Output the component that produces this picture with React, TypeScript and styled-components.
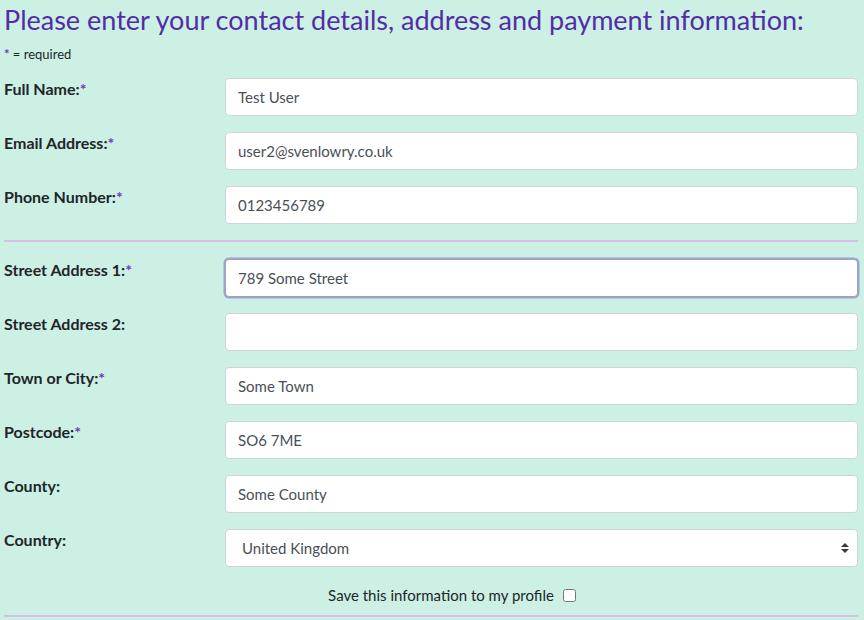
import React, { useState } from "react";
import styled, { createGlobalStyle } from "styled-components";

const GlobalStyle = createGlobalStyle`
  html, body {
    margin: 0;
    padding: 0;
    background: #cdf0e4;
  }
  body {
    font-family: "Lato", "Open Sans", sans-serif;
    color: #212529;
  }
  * {
    box-sizing: border-box;
  }
`;

const Page = styled.div`
  padding: 2px 6px 0 4px;
  height: 620px;
  overflow: hidden;
`;

const Title = styled.h1`
  margin: 0;
  font-size: 27px;
  font-weight: 400;
  line-height: 36px;
  color: #512da8;
`;

const Note = styled.p`
  margin: 8px 0 16px;
  font-size: 13px;
  line-height: 16px;
`;

const Star = styled.span`
  color: #6a3cb8;
  font-weight: 700;
`;

const Row = styled.div`
  display: grid;
  grid-template-columns: 221px 1fr;
  align-items: start;
  margin-bottom: 16px;
`;

const Label = styled.label`
  font-size: 16px;
  font-weight: 700;
  line-height: 22px;
`;

const Input = styled.input<{ $focused?: boolean }>`
  width: 100%;
  height: 38px;
  padding: 0 12px;
  font-family: inherit;
  font-size: 15px;
  color: #495057;
  background: #fff;
  border: 1px solid ${(p) => (p.$focused ? "#9ea2c8" : "#ced4da")};
  border-radius: 4px;
  box-shadow: ${(p) => (p.$focused ? "0 0 0 1.5px #9ea2c8" : "none")};
  outline: none;
`;

const SelectWrap = styled.div`
  position: relative;
`;

const Select = styled.select`
  width: 100%;
  height: 38px;
  padding: 0 16px;
  font-family: inherit;
  font-size: 15px;
  color: #495057;
  background: #fff;
  border: 1px solid #ced4da;
  border-radius: 4px;
  appearance: none;
  outline: none;
`;

const Caret = styled.svg`
  position: absolute;
  right: 8px;
  top: 13px;
  pointer-events: none;
`;

const Divider = styled.hr`
  margin: 0 0 17px;
  border: none;
  height: 2px;
  background: #d9bde4;
`;

const SaveLine = styled.label`
  display: flex;
  align-items: center;
  justify-content: center;
  gap: 9px;
  height: 24px;
  margin-bottom: 8px;
  padding-left: 42px;
  font-size: 15px;
`;

const Check = styled.input`
  width: 13px;
  height: 13px;
  margin: 0;
`;

type Field = { label: string; value: string; required?: boolean; focused?: boolean };

const contact: Field[] = [
  { label: "Full Name:", value: "Test User", required: true },
  { label: "Email Address:", value: "user2@svenlowry.co.uk", required: true },
  { label: "Phone Number:", value: "0123456789", required: true },
];

const address: Field[] = [
  { label: "Street Address 1:", value: "789 Some Street", required: true, focused: true },
  { label: "Street Address 2:", value: "" },
  { label: "Town or City:", value: "Some Town", required: true },
  { label: "Postcode:", value: "SO6 7ME", required: true },
  { label: "County:", value: "Some County" },
];

const FieldRow = ({ field }: { field: Field }) => {
  const [value, setValue] = useState(field.value);
  return (
    <Row>
      <Label>
        {field.label}
        {field.required && <Star>*</Star>}
      </Label>
      <Input
        $focused={field.focused}
        value={value}
        onChange={(e) => setValue(e.target.value)}
      />
    </Row>
  );
};

export default function App() {
  return (
    <>
      <GlobalStyle />
      <Page>
        <Title>Please enter your contact details, address and payment information:</Title>
        <Note>
          <Star>*</Star> = required
        </Note>

        {contact.map((f) => (
          <FieldRow key={f.label} field={f} />
        ))}

        <Divider />

        {address.map((f) => (
          <FieldRow key={f.label} field={f} />
        ))}

        <Row>
          <Label>Country:</Label>
          <SelectWrap>
            <Select defaultValue="GB">
              <option value="GB">United Kingdom</option>
            </Select>
            <Caret width="10" height="12" viewBox="0 0 10 12">
              <path d="M5 1 L9 5 H1 Z M1 7 H9 L5 11 Z" fill="#343a40" />
            </Caret>
          </SelectWrap>
        </Row>

        <SaveLine>
          Save this information to my profile
          <Check type="checkbox" />
        </SaveLine>

        <Divider />
      </Page>
    </>
  );
}
